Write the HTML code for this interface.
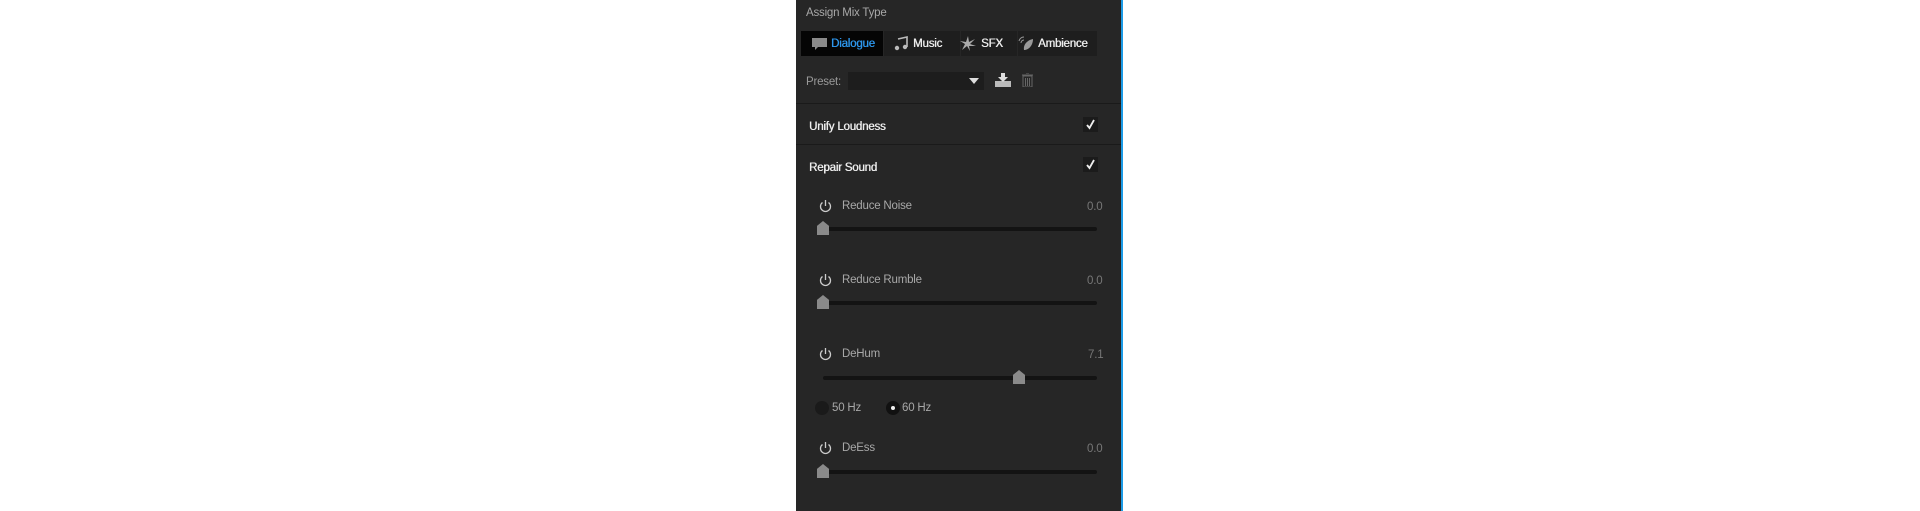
<!DOCTYPE html>
<html><head><style>
body{margin:0;width:1920px;height:511px;background:#fff;position:relative;overflow:hidden;font-family:"Liberation Sans",sans-serif;}
#p{position:absolute;left:796px;top:0;width:325px;height:511px;background:#262626;}
#b{position:absolute;left:1121px;top:0;width:2px;height:511px;background:#1c9be6;}
.a{position:absolute;white-space:nowrap;}
.t{color:#a8a8a8;font-size:11.5px;letter-spacing:-0.2px;}
.w{color:#ececec;font-size:11.5px;letter-spacing:-0.2px;text-shadow:0.4px 0 0 currentColor;}
.track{position:absolute;height:4px;background:#131313;border-radius:2px;}
.thumb{position:absolute;width:12px;height:14px;background:#8a8a8a;clip-path:polygon(0 35%,50% 0,100% 35%,100% 100%,0 100%);}
.line{position:absolute;left:796px;width:325px;height:1px;background:#1a1a1a;}
.cb{position:absolute;width:15px;height:15px;background:#1b1b1b;}
</style></head><body>
<div id="p"></div><div id="b"></div>
<div class="a t" style="left:806px;top:7px;">Assign Mix Type</div>
<div class="a" style="left:801px;top:31px;width:296px;height:25px;background:#1e1e1e;"></div>
<div class="a" style="left:801px;top:31px;width:82px;height:25px;background:#050505;"></div>
<div class="a" style="left:883px;top:31px;width:1px;height:25px;background:#262626;"></div>
<div class="a" style="left:960px;top:31px;width:1px;height:25px;background:#262626;"></div>
<div class="a" style="left:1017px;top:31px;width:1px;height:25px;background:#262626;"></div>
<svg class="a" style="left:811px;top:37px" width="17" height="14"><path d="M1 1h15v9H7l-3 3v-3H1z" fill="#8a8a8a"/></svg>
<div class="a w" style="left:831px;top:38px;color:#2d95ea;">Dialogue</div>
<svg class="a" style="left:894px;top:36px" width="14" height="15"><path d="M4 3l9-2v10" stroke="#bbb" stroke-width="1.6" fill="none"/><circle cx="3" cy="12" r="2.2" fill="#bbb"/><circle cx="11" cy="11" r="2.2" fill="#bbb"/></svg>
<div class="a w" style="left:913px;top:38px;">Music</div>
<svg class="a" style="left:960px;top:36px" width="16" height="15"><path d="M8 0L9 6L15 3L10 8L16 10L9 10L10 15L7 10L2 14L5 8L0 5L6 6Z" fill="#aaa"/></svg>
<div class="a w" style="left:981px;top:38px;">SFX</div>
<svg class="a" style="left:1018px;top:35px" width="16" height="16"><path d="M6 15C5 9 10 5 15 4C15 10 11 15 6 15Z" fill="#999"/><path d="M1 6a5 5 0 0 1 5-4M3 8a3 3 0 0 1 3-3" stroke="#999" fill="none"/></svg>
<div class="a w" style="left:1038px;top:38px;">Ambience</div>
<div class="a t" style="left:806px;top:76px;color:#999">Preset:</div>
<div class="a" style="left:848px;top:72px;width:136px;height:18px;background:#1d1d1d;"></div>
<svg class="a" style="left:969px;top:78px" width="10" height="6"><path d="M0 0h10L5 6z" fill="#ddd"/></svg>
<svg class="a" style="left:995px;top:73px" width="16" height="14"><rect x="0" y="8" width="16" height="6" fill="#bbb"/><path d="M6 0h4v4h3l-5 5-5-5h3z" fill="#ddd"/></svg>
<svg class="a" style="left:1022px;top:73px" width="11" height="14"><path d="M0 2h11M4 0h3M1 3h9v11H1z M3.5 5v8M5.5 5v8M7.5 5v8" stroke="#666" fill="none"/></svg>
<div class="line" style="top:103px"></div>
<div class="a w" style="left:809px;top:121px;">Unify Loudness</div>
<div class="cb" style="left:1083px;top:117px"></div>
<svg class="a" style="left:1085px;top:119px" width="11" height="11"><path d="M2 6l2.5 3L9 1" stroke="#eee" stroke-width="1.8" fill="none"/></svg>
<div class="line" style="top:144px"></div>
<div class="a w" style="left:809px;top:162px;">Repair Sound</div>
<div class="cb" style="left:1083px;top:157px"></div>
<svg class="a" style="left:1085px;top:159px" width="11" height="11"><path d="M2 6l2.5 3L9 1" stroke="#eee" stroke-width="1.8" fill="none"/></svg>

<svg class="a" style="left:819px;top:199px" width="13" height="14"><path d="M3.5 3.5A5 5 0 1 0 9.5 3.5M6.5 1v6" stroke="#ccc" stroke-width="1.3" fill="none"/></svg>
<div class="a t" style="left:842px;top:200px;">Reduce Noise</div>
<div class="a t" style="left:1087px;top:201px;color:#777">0.0</div>
<div class="track" style="left:823px;top:227px;width:274px"></div>
<div class="thumb" style="left:817px;top:221px"></div>

<svg class="a" style="left:819px;top:273px" width="13" height="14"><path d="M3.5 3.5A5 5 0 1 0 9.5 3.5M6.5 1v6" stroke="#ccc" stroke-width="1.3" fill="none"/></svg>
<div class="a t" style="left:842px;top:274px;">Reduce Rumble</div>
<div class="a t" style="left:1087px;top:275px;color:#777">0.0</div>
<div class="track" style="left:823px;top:301px;width:274px"></div>
<div class="thumb" style="left:817px;top:295px"></div>

<svg class="a" style="left:819px;top:347px" width="13" height="14"><path d="M3.5 3.5A5 5 0 1 0 9.5 3.5M6.5 1v6" stroke="#ccc" stroke-width="1.3" fill="none"/></svg>
<div class="a t" style="left:842px;top:348px;">DeHum</div>
<div class="a t" style="left:1088px;top:349px;color:#777">7.1</div>
<div class="track" style="left:823px;top:376px;width:274px"></div>
<div class="thumb" style="left:1013px;top:370px"></div>

<div class="a" style="left:815px;top:401px;width:14px;height:14px;border-radius:50%;background:#1a1a1a;"></div>
<div class="a t" style="left:832px;top:402px;">50 Hz</div>
<div class="a" style="left:886px;top:401px;width:14px;height:14px;border-radius:50%;background:#111;"></div>
<div class="a" style="left:891px;top:406px;width:4px;height:4px;border-radius:50%;background:#eee;"></div>
<div class="a t" style="left:902px;top:402px;">60 Hz</div>

<svg class="a" style="left:819px;top:441px" width="13" height="14"><path d="M3.5 3.5A5 5 0 1 0 9.5 3.5M6.5 1v6" stroke="#ccc" stroke-width="1.3" fill="none"/></svg>
<div class="a t" style="left:842px;top:442px;">DeEss</div>
<div class="a t" style="left:1087px;top:443px;color:#777">0.0</div>
<div class="track" style="left:823px;top:470px;width:274px"></div>
<div class="thumb" style="left:817px;top:464px"></div>
</body></html>
